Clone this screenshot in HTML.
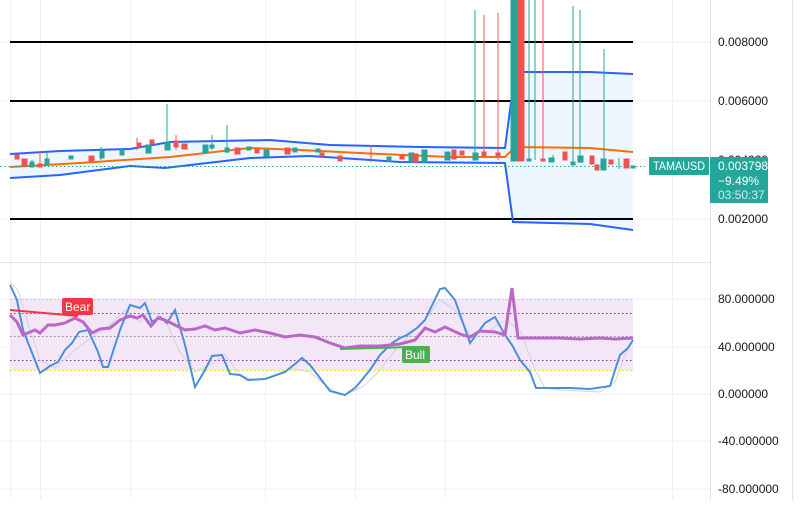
<!DOCTYPE html>
<html><head><meta charset="utf-8"><style>
body{margin:0;background:#fff;width:802px;height:500px;overflow:hidden;font-family:"Liberation Sans",sans-serif}
svg text{font-family:"Liberation Sans",sans-serif;font-size:12px;fill:#131722}
</style></head><body>
<svg width="802" height="500" xmlns="http://www.w3.org/2000/svg">
<g stroke="#eef0f3" stroke-width="1">
<line x1="10.5" y1="0" x2="10.5" y2="500"/>
<line x1="40.5" y1="0" x2="40.5" y2="500"/>
<line x1="130.5" y1="0" x2="130.5" y2="500"/>
<line x1="265.5" y1="0" x2="265.5" y2="500"/>
<line x1="355.5" y1="0" x2="355.5" y2="500"/>
<line x1="445.5" y1="0" x2="445.5" y2="500"/>
<line x1="672.5" y1="0" x2="672.5" y2="500"/>
<line x1="0" y1="42" x2="710" y2="42"/><line x1="0" y1="101" x2="710" y2="101"/>
<line x1="0" y1="160" x2="710" y2="160"/><line x1="0" y1="219" x2="710" y2="219"/>
<line x1="0" y1="299" x2="710" y2="299"/><line x1="0" y1="347" x2="710" y2="347"/>
<line x1="0" y1="394" x2="710" y2="394"/><line x1="0" y1="441" x2="710" y2="441"/>
<line x1="0" y1="489" x2="710" y2="489"/>
</g>
<line x1="710.5" y1="0" x2="710.5" y2="500" stroke="#e0e3eb"/>
<line x1="792.5" y1="0" x2="792.5" y2="500" stroke="#e0e3eb"/>
<line x1="0" y1="262.5" x2="710" y2="262.5" stroke="#e0e3eb"/>
<polygon fill="#eef6ff" points="10,154 60,151 130,149 170,142 270,140 330,145 420,147 505,148 515,72 590,72 633,74 633,230 590,224 513,222 505,163 400,162 310,156 250,158 165,168 130,166 60,175 10,178"/>
<g stroke="#000" stroke-width="2"><line x1="10" y1="42" x2="633" y2="42"/><line x1="10" y1="101" x2="633" y2="101"/><line x1="10" y1="219" x2="633" y2="219"/></g>
<polyline fill="none" stroke="#2962ff" stroke-width="2" points="10,154 60,151 130,149 170,142 270,140 330,145 420,147 505,148 515,72 590,72 633,74"/>
<polyline fill="none" stroke="#2962ff" stroke-width="2" points="10,178 60,175 130,166 165,168 250,158 310,156 400,162 505,163 513,222 590,224 633,230"/>
<polyline fill="none" stroke="#ff6d00" stroke-width="2" points="10,167 80,163 170,157 250,148 300,150 380,154 450,157 505,157 515,147 590,148 633,152"/>
<line x1="0" y1="166.5" x2="645" y2="166.5" stroke="#26a69a" stroke-dasharray="1.5,2.5"/>
<g stroke-width="1">
<g fill="#26a69a" stroke="#26a69a">
<line x1="32" y1="160" x2="32" y2="167"/><rect x="30" y="162" width="4" height="5"/>
<line x1="47" y1="152" x2="47" y2="166"/><rect x="45" y="159" width="4" height="6"/>
<rect x="69" y="156" width="4" height="3"/><rect x="100" y="151" width="4" height="7"/>
<line x1="101" y1="147" x2="101" y2="160"/><rect x="120" y="150" width="4" height="5"/>
<rect x="146" y="145" width="5" height="8"/><line x1="167" y1="104" x2="167" y2="150"/><rect x="165" y="142" width="5" height="8"/>
<rect x="203" y="145" width="5" height="8"/><line x1="212" y1="135" x2="212" y2="150"/><rect x="210" y="145" width="4" height="3"/>
<line x1="227" y1="125" x2="227" y2="153"/><rect x="225" y="148" width="4" height="4"/><rect x="247" y="147" width="4" height="3"/>
<rect x="264" y="150" width="5" height="6"/><rect x="293" y="148" width="4" height="4"/><rect x="316" y="149" width="4" height="3"/>
<rect x="387" y="157" width="4" height="4"/><rect x="409" y="153" width="5" height="9"/><rect x="422" y="150" width="5" height="12"/>
<line x1="475" y1="10" x2="475" y2="160"/><rect x="473" y="153" width="5" height="7"/>
<rect x="445" y="152" width="5" height="8"/><rect x="511" y="0" width="6" height="161"/>
<line x1="529" y1="0" x2="529" y2="161"/><rect x="527" y="159" width="4" height="2"/>
<line x1="535" y1="0" x2="535" y2="160"/><line x1="553" y1="155" x2="553" y2="162"/><rect x="549" y="158" width="5" height="4"/>
<line x1="573" y1="6" x2="573" y2="164"/><rect x="571" y="162" width="4" height="3"/><line x1="580" y1="10" x2="580" y2="163"/><rect x="578" y="156" width="5" height="6"/>
<line x1="604" y1="49" x2="604" y2="170"/><rect x="601" y="159" width="5" height="11"/><line x1="619" y1="158" x2="619" y2="169"/><rect x="631" y="166" width="4" height="2"/>
</g>
<g fill="#ef5350" stroke="#ef5350">
<rect x="15" y="155" width="4" height="4"/><rect x="22" y="159" width="5" height="7"/><line x1="40" y1="152" x2="40" y2="167"/><rect x="38" y="164" width="4" height="3"/>
<rect x="89" y="156" width="5" height="5"/><rect x="137" y="143" width="4" height="4"/><line x1="137" y1="138" x2="137" y2="150"/>
<rect x="150" y="140" width="4" height="4"/><rect x="174" y="141" width="4" height="6"/><line x1="176" y1="135" x2="176" y2="150"/>
<rect x="182" y="144" width="5" height="5"/><rect x="235" y="148" width="5" height="6"/><rect x="255" y="149" width="4" height="4"/>
<rect x="285" y="148" width="5" height="6"/><rect x="320" y="153" width="4" height="3"/><rect x="338" y="156" width="4" height="5"/>
<line x1="371" y1="145" x2="371" y2="162"/><rect x="400" y="155" width="4" height="4"/><rect x="413" y="154" width="5" height="8"/>
<rect x="452" y="150" width="4" height="9"/><rect x="460" y="151" width="4" height="4"/>
<line x1="484" y1="15" x2="484" y2="158"/><line x1="498" y1="13" x2="498" y2="160"/><rect x="482" y="152" width="4" height="4"/><rect x="496" y="153" width="4" height="3"/>
<rect x="518" y="0" width="6" height="161"/><line x1="543" y1="0" x2="543" y2="161"/><rect x="541" y="159" width="4" height="2"/>
<rect x="563" y="152" width="4" height="8"/><rect x="590" y="156" width="4" height="8"/><rect x="595" y="165" width="4" height="5"/>
<rect x="609" y="160" width="4" height="4"/><rect x="624" y="159" width="5" height="9"/>
</g>
</g>
<text x="718" y="46">0.008000</text><text x="718" y="105">0.006000</text>
<text x="718" y="164">0.004000</text><text x="718" y="223">0.002000</text>
<rect x="649" y="157" width="60" height="18" fill="#26a69a" rx="1"/>
<text x="653" y="170" textLength="52" lengthAdjust="spacingAndGlyphs" style="fill:#fff">TAMAUSD</text>
<rect x="710" y="157" width="58" height="46" fill="#26a69a" rx="1"/>
<text x="718" y="170" style="fill:#fff">0.003798</text>
<text x="718" y="185" style="fill:#fff">−9.49%</text>
<text x="718" y="199" style="fill:#cdeee9">03:50:37</text>
<rect x="10" y="299" width="623" height="71" fill="#f3e6f6"/>
<g stroke-width="1" stroke-dasharray="1.5,2.5">
<line x1="10" y1="299.5" x2="633" y2="299.5" stroke="#f0d000"/>
<line x1="10" y1="370.5" x2="633" y2="370.5" stroke="#f0d000"/>
<line x1="10" y1="313.5" x2="633" y2="313.5" stroke="#9c27b0"/>
<line x1="10" y1="336.5" x2="633" y2="336.5" stroke="#888"/>
<line x1="10" y1="360.5" x2="633" y2="360.5" stroke="#9c27b0"/>
</g>
<polyline fill="none" stroke="#cfd3da" stroke-width="1" points="10,282 18,290 30,330 40,360 55,368 75,350 95,335 110,325 125,310 140,322 150,310 165,320 180,352 195,372 210,365 225,355 240,375 255,380 270,378 290,368 310,372 325,385 340,395 350,393 365,385 380,370 395,350 410,335 425,320 440,300 455,310 470,335 490,330 505,320 520,330 535,370 545,388 560,390 600,392 615,382 625,355 633,340"/>
<polyline fill="none" stroke="#4a90d9" stroke-width="2" points="10,285 17,300 23,330 40,373 50,366 58,362 65,350 72,343 79,332 88,330 98,352 103,367 108,367 120,330 130,305 140,308 145,303 152,322 160,317 167,323 175,310 185,345 195,387 205,370 212,356 222,355 230,374 240,375 248,380 265,379 285,372 295,364 302,358 310,365 320,378 330,391 345,395 356,387 370,370 380,355 392,343 400,338 407,335 417,328 425,320 440,289 445,288 455,300 470,343 485,323 495,317 505,335 512,345 520,360 530,372 536,388 550,388 570,388 590,389 610,386 615,370 620,355 628,348 633,340"/>
<polyline fill="none" stroke="#ba68c8" stroke-width="3" points="10,315 17,322 23,335 30,332 35,330 40,333 48,325 55,325 65,323 75,318 83,322 92,333 100,329 110,328 120,320 130,316 137,318 143,315 151,326 158,318 165,320 175,325 185,330 195,329 205,326 215,330 225,328 240,333 255,330 270,333 285,337 300,335 315,337 330,343 345,348 360,346 380,346 400,344 415,340 425,328 435,332 445,327 460,334 470,337 480,331 495,332 505,335 512,288 518,338 535,338 560,338 580,339 600,338 615,339 633,338"/>
<line x1="10" y1="310" x2="78" y2="316" stroke="#f23645" stroke-width="2"/>
<line x1="340" y1="349" x2="410" y2="347" stroke="#4caf50" stroke-width="2"/>
<rect x="62" y="298" width="31" height="17" rx="2" fill="#f23645"/>
<text x="65" y="311" style="fill:#fff">Bear</text>
<rect x="402" y="346" width="28" height="17" rx="2" fill="#4caf50"/>
<text x="405" y="359" style="fill:#fff">Bull</text>
<text x="718" y="303">80.000000</text><text x="718" y="351">40.000000</text>
<text x="718" y="398">0.000000</text><text x="718" y="445">-40.000000</text>
<text x="718" y="493">-80.000000</text>
</svg>
</body></html>
